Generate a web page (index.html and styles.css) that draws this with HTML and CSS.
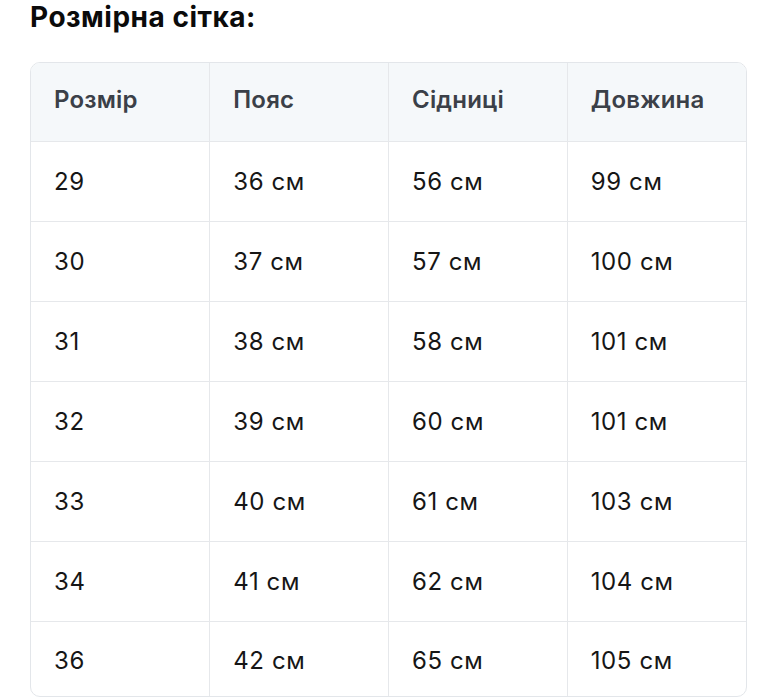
FILE: index.html
```html
<!DOCTYPE html>
<html lang="uk">
<head>
<meta charset="utf-8">
<link rel="stylesheet" href="styles.css">
</head>
<body>
<main class="page">
  <h2 class="title">Розмірна сітка:</h2>
  <div class="table-wrap">
    <table class="sizes">
      <thead>
        <tr><th>Розмір</th><th>Пояс</th><th>Сідниці</th><th>Довжина</th></tr>
      </thead>
      <tbody>
        <tr><td>29</td><td>36 см</td><td>56 см</td><td>99 см</td></tr>
        <tr><td>30</td><td>37 см</td><td>57 см</td><td>100 см</td></tr>
        <tr><td>31</td><td>38 см</td><td>58 см</td><td>101 см</td></tr>
        <tr><td>32</td><td>39 см</td><td>60 см</td><td>101 см</td></tr>
        <tr><td>33</td><td>40 см</td><td>61 см</td><td>103 см</td></tr>
        <tr><td>34</td><td>41 см</td><td>62 см</td><td>104 см</td></tr>
        <tr><td>36</td><td>42 см</td><td>65 см</td><td>105 см</td></tr>
      </tbody>
    </table>
  </div>
</main>
</body>
</html>
```
FILE: styles.css
```css
html, body {
  margin: 0;
  padding: 0;
  background: #ffffff;
}
body {
  font-family: Inter, "Noto Sans", "Liberation Sans", sans-serif;
  color: #111111;
}
.page {
  padding: 0 31px 0 30px;
}
.title {
  margin: 0;
  padding-top: 1px;
  height: 62px;
  box-sizing: border-box;
  font-size: 28px;
  font-weight: 700;
  line-height: 32px;
  letter-spacing: 0.5px;
  color: #0b0b0b;
}
.table-wrap {
  border: 1px solid #e3e6ea;
  border-radius: 10px;
  overflow: hidden;
  width: 717px;
  box-sizing: border-box;
}
.sizes {
  width: 100%;
  border-collapse: collapse;
  table-layout: fixed;
}
.sizes th,
.sizes td {
  text-align: left;
  padding: 0 0 0 23px;
  font-size: 24px;
  border-right: 1px solid #e6e8eb;
  border-bottom: 1px solid #e6e8eb;
}
.sizes th:last-child,
.sizes td:last-child {
  border-right: none;
}
.sizes tr:last-child td {
  border-bottom: none;
}
.sizes th {
  height: 78px;
  padding-bottom: 4px;
  box-sizing: border-box;
  background: #f5f8fa;
  font-weight: 600;
  letter-spacing: 0.2px;
  color: #3b4048;
}
.sizes td {
  height: 79px;
  font-weight: 400;
  letter-spacing: 0.6px;
  color: #161616;
}
.sizes tr:last-child td {
  height: 75px;
  padding-top: 3px;
  box-sizing: border-box;
}
```
